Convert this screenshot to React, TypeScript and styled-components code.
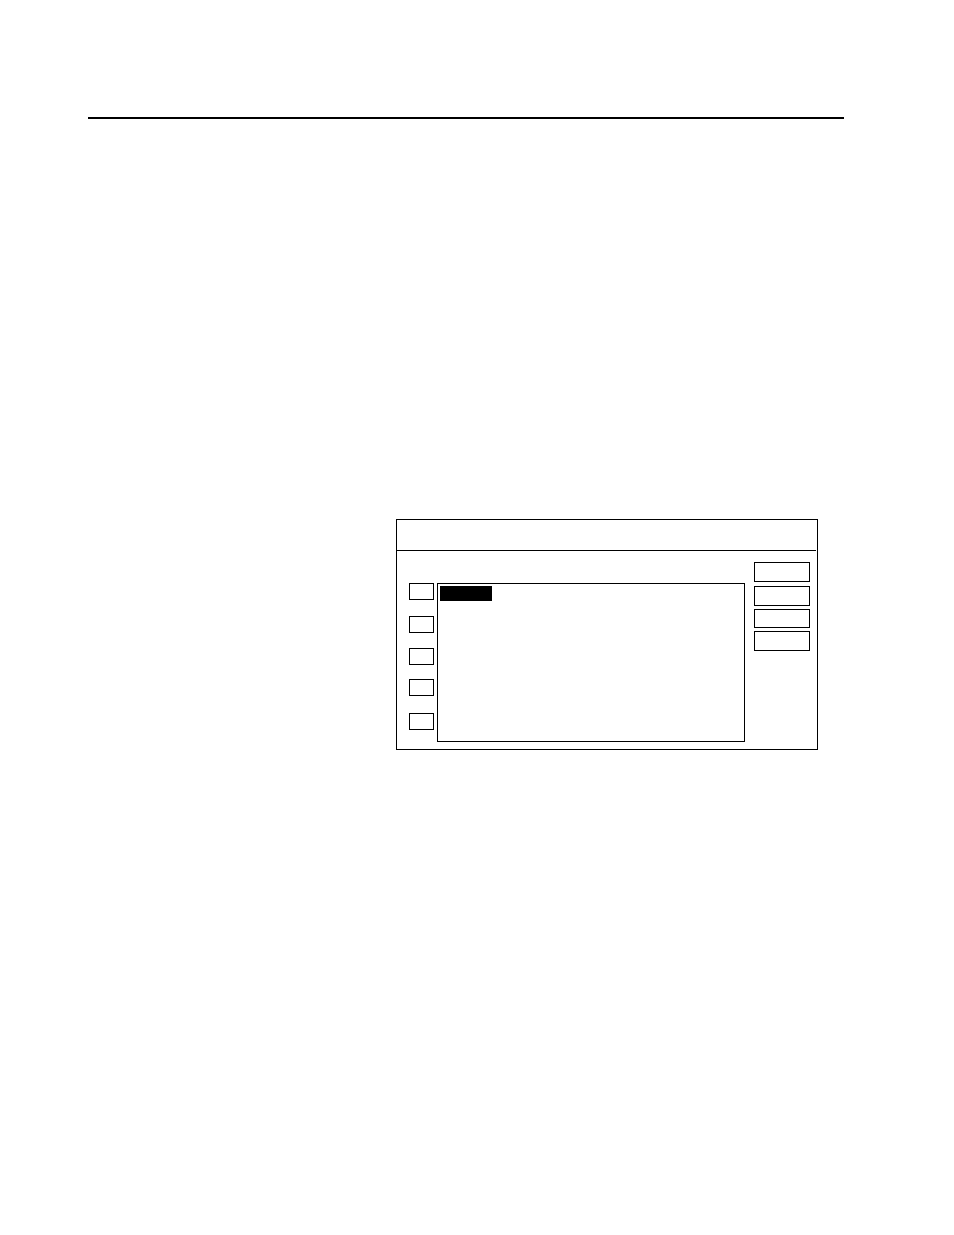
import styled, { createGlobalStyle } from 'styled-components';

const GlobalStyle = createGlobalStyle`
  html, body {
    margin: 0;
    padding: 0;
    background: #ffffff;
  }
  body {
    font-family: "Liberation Sans", Arial, sans-serif;
  }
`;

const Page = styled.div`
  width: 954px;
  height: 1235px;
  background: #ffffff;
  overflow: hidden;
  display: flex;
  flex-direction: column;
  align-items: flex-start;
`;

const HeaderRule = styled.div`
  margin-top: 117px;
  margin-left: 88px;
  width: 756px;
  height: 2px;
  background: #000000;
`;

const Dialog = styled.div`
  margin-top: 400px;
  margin-left: 396px;
  width: 420px;
  height: 229px;
  border: 1px solid #000000;
  display: flex;
  flex-direction: column;
`;

const TitleBar = styled.div`
  height: 30px;
  border-bottom: 1px solid #000000;
  margin-right: 1px;
  flex-shrink: 0;
`;

const DialogBody = styled.div`
  flex: 1;
  display: flex;
  align-items: flex-start;
  padding-left: 12px;
`;

const SideColumn = styled.div`
  display: flex;
  flex-direction: column;
  margin-top: 32px;
`;

const SideBox = styled.div<{ $offset: number }>`
  width: 23px;
  height: 15px;
  border: 1px solid #000000;
  margin-top: ${(p) => p.$offset}px;
`;

const ListBox = styled.div`
  margin-top: 32px;
  margin-left: 3px;
  width: 308px;
  height: 159px;
  box-sizing: border-box;
  border: 1px solid #000000;
  padding: 2px;
  display: flex;
  flex-direction: column;
  align-items: flex-start;
`;

const ListItem = styled.div<{ $selected?: boolean }>`
  width: 52px;
  height: 15px;
  background: ${(p) => (p.$selected ? '#000000' : 'transparent')};
`;

const ButtonColumn = styled.div`
  margin-top: 11px;
  margin-left: 9px;
  display: flex;
  flex-direction: column;
`;

const SideButton = styled.div<{ $offset: number; $height: number }>`
  width: 54px;
  height: ${(p) => p.$height}px;
  border: 1px solid #000000;
  margin-top: ${(p) => p.$offset}px;
`;

const sideOffsets = [0, 16, 15, 14, 17];
const buttons = [
  { offset: 0, height: 18 },
  { offset: 4, height: 18 },
  { offset: 3, height: 17 },
  { offset: 3, height: 18 },
];

export default function App() {
  return (
    <>
      <GlobalStyle />
      <Page>
        <HeaderRule />
        <Dialog>
          <TitleBar />
          <DialogBody>
            <SideColumn>
              {sideOffsets.map((o, i) => (
                <SideBox key={i} $offset={o} />
              ))}
            </SideColumn>
            <ListBox>
              <ListItem $selected />
            </ListBox>
            <ButtonColumn>
              {buttons.map((b, i) => (
                <SideButton key={i} $offset={b.offset} $height={b.height} />
              ))}
            </ButtonColumn>
          </DialogBody>
        </Dialog>
      </Page>
    </>
  );
}
